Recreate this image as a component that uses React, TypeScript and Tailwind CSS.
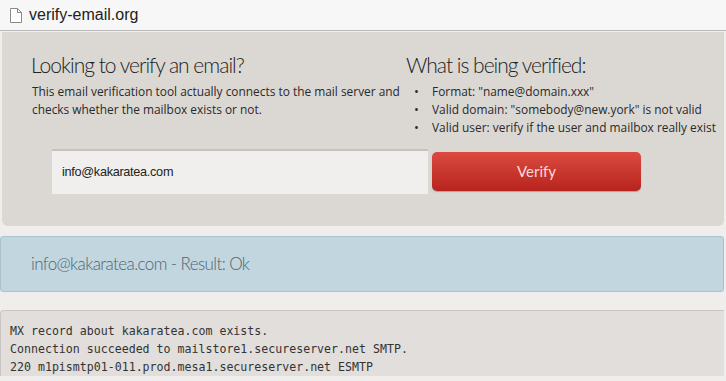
export default function App() {
  return (
    <div className="h-[381px] w-[726px] overflow-hidden bg-[#efeeec] font-['Open_Sans',sans-serif] text-[#333]">
      <div className="flex h-[31px] items-center gap-[7px] border-b border-[#b9b9b9] bg-[#f7f7f7] pl-[10px]">
        <svg width="12" height="15" viewBox="0 0 12 15" fill="none" stroke="#8a8a8a" strokeWidth="1">
          <path d="M0.5 0.5h7l4 4v10h-11z" fill="#fff" />
          <path d="M7.5 0.5v4h4" />
        </svg>
        <span className="font-['Liberation_Sans',sans-serif] text-[16px] text-[#222]">verify-email.org</span>
      </div>

      <div className="ml-[2px] mr-[2px] mt-[1px] rounded-b-[6px] bg-[#dbd8d4] pb-[32px] pt-[20px]">
        <div className="flex pl-[29px]">
          <div className="w-[375px]">
            <h1 className="font-['Lato',sans-serif] text-[21px] font-light leading-[26px] tracking-[-1px] text-[#222]">
              Looking to verify an email?
            </h1>
            <p className="mt-[4px] pl-[1px] text-[11.9px] leading-[18px] text-[#2a2a2a]">
              This email verification tool actually connects to the mail server and checks whether the mailbox exists or not.
            </p>
          </div>
          <div>
            <h2 className="font-['Lato',sans-serif] text-[21px] font-light leading-[26px] tracking-[-1px] text-[#222]">
              What is being verified:
            </h2>
            <ul className="mt-[4px] text-[11.9px] leading-[18px] text-[#2a2a2a]">
              <li className="flex pl-[8px]"><span className="w-[18px] text-[13px]">•</span>Format: "name@domain.xxx"</li>
              <li className="flex pl-[8px]"><span className="w-[18px] text-[13px]">•</span>Valid domain: "somebody@new.york" is not valid</li>
              <li className="flex pl-[8px]"><span className="w-[18px] text-[13px]">•</span>Valid user: verify if the user and mailbox really exist</li>
            </ul>
          </div>
        </div>
        <div className="mt-[13px] flex items-center gap-[4px] pl-[50px]">
          <div className="flex h-[45px] w-[376px] items-center border-t-2 border-[#c6c3bf] bg-[#f0efed] pl-[10px] font-['Liberation_Sans',sans-serif] text-[12.7px] tracking-[-0.3px] text-[#222]">
            info@kakaratea.com
          </div>
          <button className="h-[39px] w-[209px] rounded-[5px] bg-gradient-to-b from-[#dc4a3f] to-[#b6231d] font-['Lato',sans-serif] text-[15px] text-[#f7dcd8] shadow-[0_1px_1px_rgba(0,0,0,0.25)]">
            Verify
          </button>
        </div>
      </div>

      <div className="mt-[10px] mr-[2px] flex h-[56px] items-center rounded-[3px] border border-[#aac2cb] bg-[#c2d6e0] pl-[30px] font-['Lato',sans-serif] text-[17px] font-light tracking-[-0.6px] text-[#4f6470]">
        info@kakaratea.com - Result: Ok
      </div>

      <div className="mt-[18px] mr-[2px] rounded-tl-[4px] border-l border-t border-[#c9c6c2] bg-[#e1dedb] pl-[9px] pt-[11px] font-['DejaVu_Sans_Mono',monospace] text-[11.6px] leading-[18px] text-[#333]">
        <div>MX record about kakaratea.com exists.</div>
        <div>Connection succeeded to mailstore1.secureserver.net SMTP.</div>
        <div>220 m1pismtp01-011.prod.mesa1.secureserver.net ESMTP</div>
      </div>
    </div>
  );
}
